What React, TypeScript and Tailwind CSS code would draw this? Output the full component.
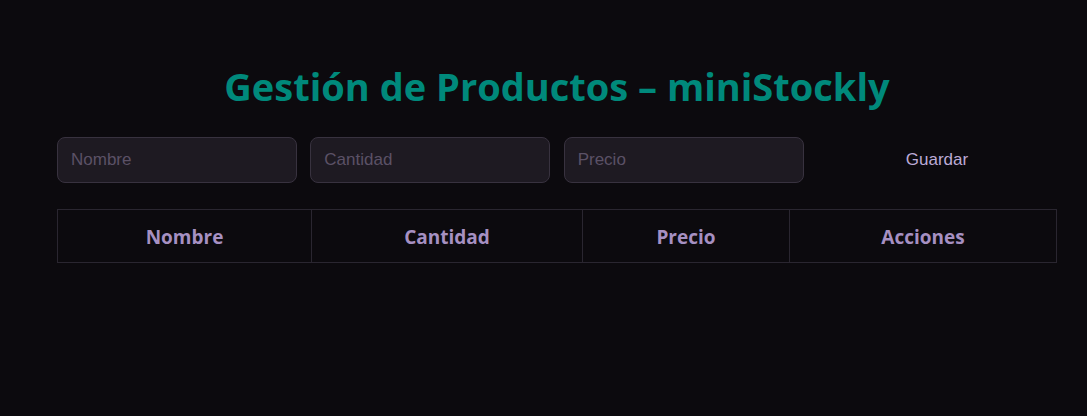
export default function App() {
  const cols = [
    { label: "Nombre", w: "w-[254px]" },
    { label: "Cantidad", w: "w-[271px]" },
    { label: "Precio", w: "w-[207px]" },
    { label: "Acciones", w: "" },
  ];

  return (
    <div className="min-h-[416px] bg-[#0c0a0e] pt-[58px]">
      <div className="ml-[57px] w-[1000px]">
        <h1 className="text-center font-['Open_Sans',sans-serif] text-[38px] font-bold leading-[56px] text-[#00897b]">
          Gestión de Productos – miniStockly
        </h1>
        <div className="mt-[23px] grid grid-cols-4 gap-[13.33px] font-['Liberation_Sans',Arial,sans-serif]">
          {["Nombre", "Cantidad", "Precio"].map((p) => (
            <input
              key={p}
              placeholder={p}
              className="h-[46px] rounded-lg border border-[#38323f] bg-[#1e1a22] px-[13px] text-[17px] text-[#c8b8dc] placeholder:text-[#5b5166] outline-none"
            />
          ))}
          <button className="h-[46px] text-[17px] text-[#bcaad6]">Guardar</button>
        </div>
        <table className="mt-[26px] w-full border-collapse font-['Open_Sans',sans-serif]">
          <thead>
            <tr>
              {cols.map((c) => (
                <th
                  key={c.label}
                  className={`${c.w} h-[53px] border border-[#2a2630] pt-[3px] text-center text-[19px] font-bold text-[#a690c2]`}
                >
                  {c.label}
                </th>
              ))}
            </tr>
          </thead>
        </table>
      </div>
    </div>
  );
}
